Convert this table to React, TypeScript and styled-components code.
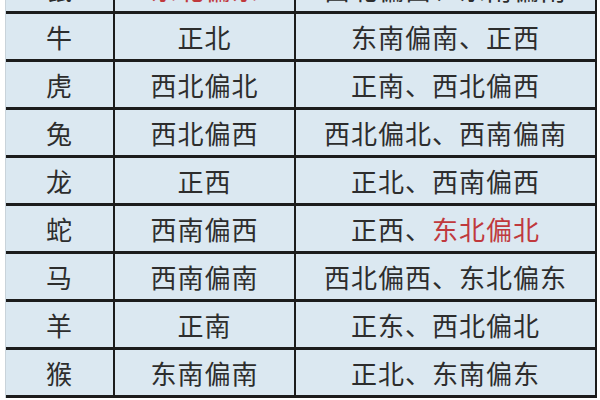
import React from 'react';
import styled, { createGlobalStyle } from 'styled-components';

type Part = { text: string; red?: boolean };
type Row = { animal: string; self: Part[]; good: Part[] };

const rows: Row[] = [
  { animal: '鼠', self: [{ text: '东北偏东', red: true }], good: [{ text: '西北偏西、东南偏南' }] },
  { animal: '牛', self: [{ text: '正北' }], good: [{ text: '东南偏南、正西' }] },
  { animal: '虎', self: [{ text: '西北偏北' }], good: [{ text: '正南、西北偏西' }] },
  { animal: '兔', self: [{ text: '西北偏西' }], good: [{ text: '西北偏北、西南偏南' }] },
  { animal: '龙', self: [{ text: '正西' }], good: [{ text: '正北、西南偏西' }] },
  { animal: '蛇', self: [{ text: '西南偏西' }], good: [{ text: '正西、' }, { text: '东北偏北', red: true }] },
  { animal: '马', self: [{ text: '西南偏南' }], good: [{ text: '西北偏西、东北偏东' }] },
  { animal: '羊', self: [{ text: '正南' }], good: [{ text: '正东、西北偏北' }] },
  { animal: '猴', self: [{ text: '东南偏南' }], good: [{ text: '正北、东南偏东' }] },
];

const App: React.FC = () => {
  return (
    <>
      <GlobalStyle />
      <Page>
        <Table>
          {rows.map((row, i) => (
            <TableRow key={i}>
              <Cell>{row.animal}</Cell>
              <Cell>
                {row.self.map((p, j) => (
                  <Word key={j} $red={p.red}>{p.text}</Word>
                ))}
              </Cell>
              <Cell $last>
                {row.good.map((p, j) => (
                  <Word key={j} $red={p.red}>{p.text}</Word>
                ))}
              </Cell>
            </TableRow>
          ))}
        </Table>
      </Page>
    </>
  );
};

export default App;

const GlobalStyle = createGlobalStyle`
  html, body {
    margin: 0;
    padding: 0;
    background: #ffffff;
    overflow: hidden;
  }
  body {
    font-family: "Noto Sans CJK SC", "Noto Sans", sans-serif;
  }
`;

const Page = styled.div`
  width: 600px;
  height: 400px;
  overflow: hidden;
  padding-left: 5px;
  box-sizing: border-box;
`;

const Table = styled.div`
  width: 589px;
  margin-top: -34px;
  border-left: 1px solid #c9d3da;
  border-right: 2px solid #1c1c1c;
  display: flex;
  flex-direction: column;
`;

const TableRow = styled.div`
  display: grid;
  grid-template-columns: 109px 181px 1fr;
  height: 45px;
  border-bottom: 3px solid #1c1c1c;
`;

const Cell = styled.div<{ $last?: boolean }>`
  display: flex;
  align-items: center;
  justify-content: center;
  background: #dbe8f1;
  border-right: ${(p) => (p.$last ? 'none' : '2px solid #1c1c1c')};
  font-size: 26px;
  color: #2d2d2d;
  white-space: nowrap;
  letter-spacing: 1px;
`;

const Word = styled.span<{ $red?: boolean }>`
  color: ${(p) => (p.$red ? '#c0393d' : 'inherit')};
`;
